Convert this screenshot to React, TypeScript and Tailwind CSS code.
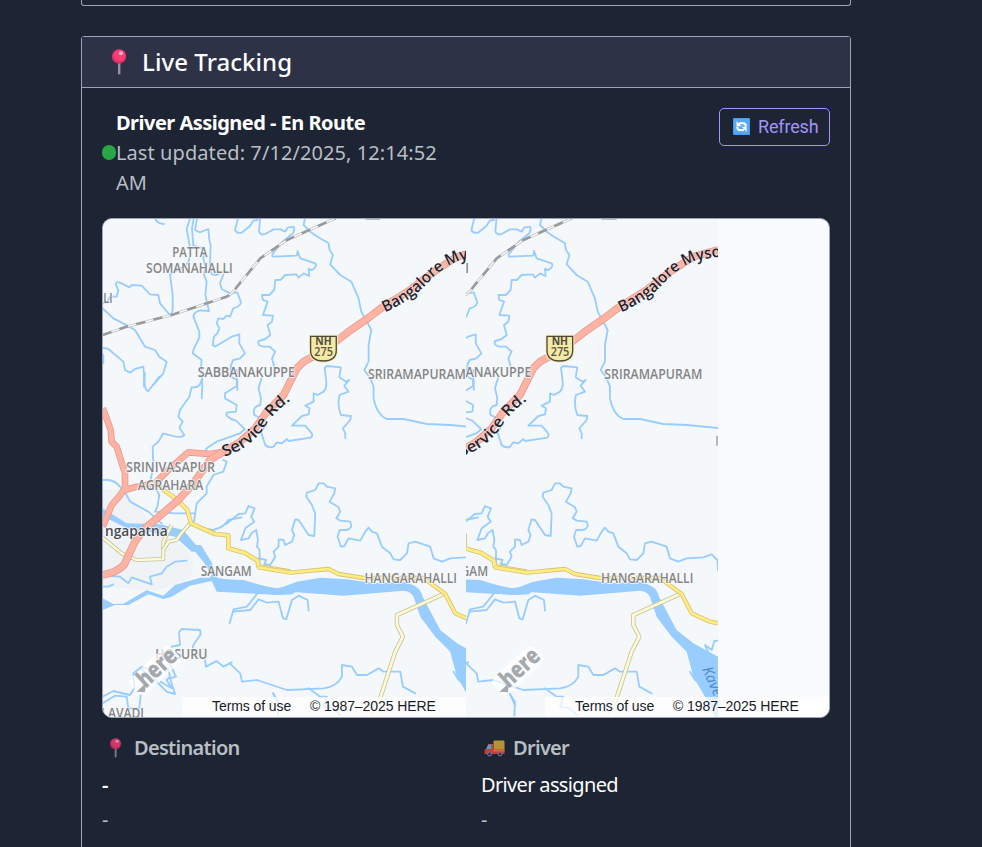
import React from "react";

const LABEL = '"Open Sans", "Noto Sans", sans-serif';
const crop = (x: number, y: number) => `translate(${x} ${y}) scale(0.33333)`;

function Pin({ className }: { className: string }) {
  return (
    <svg viewBox="0 0 16 26" className={className}>
      <rect x="7" y="13" width="2.4" height="12.5" rx="1" fill="#9a8da5" />
      <circle cx="8" cy="7.5" r="7.2" fill="#d92f62" />
      <circle cx="8.6" cy="6.6" r="6" fill="#fb3d75" />
      <circle cx="10" cy="4.2" r="2" fill="#ffb3ca" />
    </svg>
  );
}

function RefreshIcon() {
  return (
    <svg viewBox="0 0 17 17" className="-mt-px h-[17px] w-[17px]">
      <rect width="17" height="17" rx="1" fill="#489cf0" />
      <rect x="1" y="1" width="15" height="14.5" rx="1" fill="#5aa9f7" />
      <g fill="none" stroke="#fff" strokeWidth="2">
        <path d="M6 5.2h4.2q2.6 0 2.6 3.2" />
        <path d="M11 12h-4.2q-2.6 0-2.6-3.2" />
      </g>
      <path d="M3.6 3.2v5h5zM13.6 13.8v-5h-5z" fill="#fff" />
    </svg>
  );
}

function Truck() {
  return (
    <svg viewBox="0 0 21 17" className="h-[17px] w-[21px] opacity-85">
      <path d="M9.5 1.5q0-1 1-1h9q1 0 1 1v9.500h-11z" fill="#d0a63c" />
      <path d="M4.300 4h5.200v6H1.500z" fill="#dc4b3c" />
      <path d="M4.500 4.500h2.700v4.500H2.200z" fill="#58b6de" />
      <path d="M.5 9.500h20v4.500H.5z" fill="#df4638" />
      <path d="M9 10h11.500v1.500H9z" fill="#ee7b43" />
      <g fill="#3d3457" stroke="#8d7fa8" strokeWidth="1">
        <circle cx="5.500" cy="14" r="2" />
        <circle cx="16" cy="14" r="2" />
      </g>
    </svg>
  );
}

function Road({ d, width, fill, edge }: { d: string; width: number; fill: string; edge: string }) {
  return (
    <g fill="none" strokeLinejoin="round">
      <path d={d} stroke={edge} strokeWidth={width} />
      <path d={d} stroke={fill} strokeWidth={width - 5} />
    </g>
  );
}

function Label({ x, y, w, children, size = 41, color = "#858585" }: { x: number; y: number; w: number; children: string; size?: number; color?: string }) {
  return (
    <g fontFamily={LABEL} fontSize={size} fontWeight={600}>
      <text x={x} y={y} textLength={w} lengthAdjust="spacingAndGlyphs" fill={color} stroke="#f5f8fb" strokeWidth="5" strokeLinejoin="round" paintOrder="stroke">
        {children}
      </text>
    </g>
  );
}

function MapArt({ id }: { id: string }) {
  const red = { fill: "#ffb3a3", edge: "#e89b92" };
  const yellow = { fill: "#ffef7a", edge: "#d9bf82" };
  const pale = { fill: "#fdfbd5", edge: "#c4c2a0" };
  return (
    <g clipPath={`url(#${id}-extent)`}>
      <clipPath id={`${id}-extent`}>
        <rect x="90" y="200" width="391.6" height="530" />
      </clipPath>
      <rect x="90" y="200" width="392" height="530" fill="#f5f8fb" />
      <path d="M102 490Q124 484 139 507Q156 530 185 548Q199 562 190 577Q165 595 130 589L102 586Z" fill="#f0f3f5" />

      <g fill="#99ccff">
        <path transform={crop(100, 380)} d="M8 385L80 430L180 433L250 450L305 515L275 515L225 470L150 455L80 445L8 408Z" />
        <path transform={crop(100, 545)} d="M268 0L303 0L335 52L355 110L325 105L335 90L310 50ZM8 160L40 177L70 176L140 136L190 152L225 120L300 98L350 98L450 115L530 130L580 130L580 148L540 150L350 140L335 108L270 122L215 155L190 162L145 148L85 180L45 180L8 195Z" />
        <path transform={crop(223.6, 450)} d="M0 388L60 390L150 417L180 410L220 395L290 383L370 388L450 400L540 397Q590 405 597 440L650 540L700 580L774 620V820L735 740L700 680L680 605L635 560L590 500L570 440Q560 424 540 422L360 437L220 427L150 435L100 425L0 425Z" />
      </g>

      <g fill="none" stroke="#99ccff" strokeWidth="5.500" strokeLinejoin="round" strokeLinecap="round">
        <g transform={crop(100, 215)}>
          <path d="M165 5Q166 25 192 27M272 5L260 42L268 85L272 115L265 143L235 165L210 178L218 240L218 285Q216 300 208 298L180 265L175 240L150 238L125 212L95 210L88 217L60 203Q48 198 47 208L55 225L50 245L30 245L22 262L8 265" />
          <path d="M292 5L285 45L300 52L325 42L328 75L332 90L330 150L335 178L350 180L375 165L360 205L365 222L390 235L412 232L423 262Q420 275 400 280L390 305L380 302L370 312L355 310L350 325L358 340L352 355L342 365L338 390L345 395L395 365L418 358L418 385L435 415L420 430L400 435L393 450L392 485L412 495L412 525" />
          <path d="M282 5L276 40L280 92L312 100L310 130L316 155L312 180L320 200L316 240L327 288L300 286Q280 292 280 305L298 350L298 368L280 405L278 415L305 435L303 455L307 510L305 550" />
          <path d="M415 5L405 45Q410 56 425 53L450 33L460 17L472 15L475 5" />
          <path d="M8 280L40 310L75 328L105 345L135 395L165 405L178 425L200 440L190 475L160 510M8 398L25 402L70 440L75 465L90 473L105 462L130 455L132 475L132 515M10 420V445" />
        </g>
        <g transform={crop(223.6, 215)}>
          <path d="M110 5L106 50Q112 62 125 57L150 43L170 43L185 50L192 38L210 35Q215 42 208 55L175 82L148 115Q143 125 150 125L220 122L222 108L230 130L275 145Q282 155 265 165L255 162L257 183L240 175L225 188L218 178L185 180L170 195L155 195L152 225L137 240L115 240L118 255L132 260L125 280L118 300L148 302L145 320L132 330L140 360L125 372L105 378Q100 392 120 395L138 395L155 410L145 430L152 455M115 485L105 520L112 550L110 570Q85 575 92 600L112 610L120 640L112 650L125 690Q135 700 150 695L160 682L175 685L190 672L195 678L262 668Q270 660 262 652L245 632L205 632L235 603L255 598L258 580L245 572L270 560L270 535L282 540L300 530Q310 520 308 500L303 458L310 453L352 457L347 487L368 500L377 495L362 512L375 530L348 540Q340 570 352 600L382 603L380 615L358 640L365 655V670" />
          <path d="M245 5L240 30L260 50L282 65L315 85L318 105L328 120L320 148L350 180L383 200L405 250L413 290L430 320L443 345L435 390L435 440L422 465L440 490L450 515L450 550Q460 600 490 612L540 612L610 627L680 630L774 639" />
        </g>
        <g transform={crop(100, 380)}>
          <path d="M135 -20Q130 30 145 34L177 -10M305 0Q300 25 275 22L268 50L240 90L235 110L248 125L238 143L253 165Q245 178 190 160L175 185L158 200L160 260L152 300L178 345L172 380L165 395L225 400L285 400M410 -30L410 18L375 40L375 55L410 75L408 95L380 98Q375 112 408 122L435 148L420 160L378 175L350 185L320 205L310 230M370 240L380 245L370 275L340 285L320 320L320 340L290 370L282 425M8 300Q40 295 60 320L80 345L90 365L145 395L185 430M275 430L310 445L340 450Q375 440 385 420L425 412" />
        </g>
        <g transform={crop(100, 545)}>
          <path d="M35 93L60 95L85 115L95 97L155 118L150 95L185 85L200 65L225 50L260 47M8 125L25 125L40 118M315 345L318 365L350 348L370 365L395 352M240 300L237 262L245 252L300 255L302 268L280 300L278 312M240 300L215 305L205 325L208 355L218 375L228 395L210 400L225 447L200 440L165 405L145 372L125 366L100 385L103 430L90 450L40 438L8 455M204 370L210 395L200 405L215 430L182 410M8 475L45 452L80 455L85 490L118 490L122 450M118 370Q140 380 148 400M520 445L535 480" />
        </g>
        <g transform={crop(223.6, 450)}>
          <path d="M8 222L45 192L65 190L75 168L93 175L83 200L92 215L65 235L52 270L75 265L85 248L98 240L103 270L100 290L108 300L108 340M105 325L128 330L122 342L140 345L155 320L150 305L165 290L165 268L180 270L185 285L205 275L212 255L205 240L215 208L225 210L255 255L272 258L275 190L265 165L248 140L250 128L275 120L285 100L300 100L310 110L335 115L332 130L318 155L345 172L350 185L338 205L350 212L380 215Q390 235 368 240L348 240L342 260L352 290L362 288L375 265L410 272L425 245L435 233L445 245L460 250L475 290L500 310L510 328L530 330L550 310L555 280L575 275L620 290L630 325L655 335L680 325L730 322L755 313L772 330L774 360" />
          <path d="M18 520L30 478L70 470L100 432M28 485L80 480L105 448L130 458L165 455L178 505L188 508L205 450L225 437L252 450L255 482M18 640L50 670L55 695L100 690L190 720L300 715Q340 710 355 680L355 645L385 650L400 675L430 675L465 655L480 665L530 665L538 710L575 730M255 715L290 740L310 740L300 770L330 775L350 795M148 730L165 755L163 797M774 572L763 573L755 600L735 585L745 608M690 665L705 690L735 710L742 750" />
        </g>
      </g>

      <g transform={crop(100, 215)} fill="none">
        <path d="M8 360L80 335L215 300L380 245Q398 236 411 215L481 130L561 75L706 10" stroke="#b3b3b3" strokeWidth="8" />
        <path d="M8 360L80 335L215 300L380 245Q398 236 411 215L481 130L561 75L706 10" stroke="#f8f8f8" strokeWidth="4.500" />
        <path d="M8 360L80 335L215 300L380 245Q398 236 411 215L481 130L561 75L706 10" stroke="#999" strokeWidth="7" strokeDasharray="28 25" />
        <path d="M796 12H841" stroke="#aaa" strokeWidth="5" />
      </g>

      <g transform={crop(100, 545)}>
        <Road {...pale} width={12} d="M215 -60L190 -10L190 42L110 45L65 25L8 -22" />
      </g>
      <g transform={crop(100, 380)}>
        <Road {...pale} width={12} d="M270 430L240 465L230 480L205 485L190 510" />
        <Road {...yellow} width={14} d="M180 322L235 362L262 390L273 430L345 462L385 466L385 505L435 519L473 542L475 559L571 575" />
        <Road {...red} width={20} d="M8 85L18 110L32 150L35 185L50 200L75 280L75 325Q60 350 35 375L8 440M75 330L105 322L165 310L210 265L265 217L330 222L370 215" />
        <Road {...red} width={23} d="M370 215L330 240L280 310L235 360L130 450L105 485L72 555Q50 577 8 585" />
      </g>
      <g transform={crop(223.6, 450)}>
        <Road {...pale} width={13} d="M660 432L520 495L520 525L538 560L515 605L468 750L440 790" />
        <Road {...yellow} width={13} d="M104 352L200 368L315 357L345 372L420 384L600 384L665 432L695 490L750 515L774 520" />
        {id === "east" && (
          <text transform="translate(726 658) rotate(66)" fontFamily={LABEL} fontStyle="italic" fontSize="44" fill="#4b8bd0">Kaveri</text>
        )}
      </g>
      <g transform={crop(223.6, 215)}>
        <Road {...red} width={23} d="M0 711L50 680L95 640L130 590L180 540L220 460L240 440L300 408L375 350L430 312L475 278L560 225L630 170L700 125L774 105" />
        <path id={`${id}-highway`} d="M484 292Q565 255 613 203Q650 162 695 142Q740 125 960 104" fill="none" />
        <path id={`${id}-service`} d="M2 725Q85 698 127 630Q160 580 222 543" fill="none" />
        <g fontFamily={LABEL} fontSize="47" fontWeight="600" fill="#1e2430" stroke="#f8f8f8" strokeWidth="2" paintOrder="stroke">
          <text textLength="398" lengthAdjust="spacingAndGlyphs"><textPath href={`#${id}-highway`} textLength="398" lengthAdjust="spacingAndGlyphs">Bangalore Mysore</textPath></text>
          <text textLength="266" lengthAdjust="spacingAndGlyphs"><textPath href={`#${id}-service`} textLength="266" lengthAdjust="spacingAndGlyphs">Service Rd.</textPath></text>
        </g>
        <path d="M261 364H338V406Q338 438 299 438Q261 438 261 406Z" fill="#f5e9a6" stroke="#f7edbd" strokeWidth="10" />
        <path d="M261 364H338V406Q338 438 299 438Q261 438 261 406Z" fill="#f5e9a6" stroke="#4d4a3c" strokeWidth="4" />
        <text x="275" y="391" fontFamily={LABEL} fontSize="29" fontWeight="700" textLength="49" lengthAdjust="spacingAndGlyphs" fill="#514e40">NH</text>
        <text x="272" y="424" fontFamily={LABEL} fontSize="35" fontWeight="600" textLength="56" lengthAdjust="spacingAndGlyphs" fill="#5b5747">275</text>
        <Label x={433} y={491} w={294}>SRIRAMAPURAM</Label>
        <path d="M771 662V692" stroke="#999" strokeWidth="4" />
      </g>
      <g transform={crop(100, 215)}>
        <Label x={217} y={126} w={105}>PATTA</Label>
        <Label x={138} y={173} w={260}>SOMANAHALLI</Label>
        <Label x={10} y={265} w={28}>LI</Label>
        <Label x={293} y={487} w={292}>SABBANAKUPPE</Label>
      </g>
      <g transform={crop(100, 380)}>
        <Label x={78} y={277} w={267}>SRINIVASAPUR</Label>
        <Label x={113} y={330} w={197}>AGRAHARA</Label>
        <Label x={15} y={469} w={188} size={43} color="#474b55">ngapatna</Label>
      </g>
      <g transform={crop(100, 545)}>
        <Label x={302} y={92} w={153}>SANGAM</Label>
        <Label x={166} y={343} w={156}>HOSURU</Label>
        <Label x={4} y={518} w={128}>LAVADI</Label>
      </g>
      <g transform={crop(223.6, 450)}>
        <Label x={423} y={398} w={277}>HANGARAHALLI</Label>
      </g>
    </g>
  );
}

function Tile({ id, left }: { id: string; left: number }) {
  return (
    <div className="relative h-full w-[363px] shrink-0 overflow-hidden">
      <svg className="block h-[498px] w-[363px]" viewBox={`${left} 219 363 498`}>
        <MapArt id={id} />
        <g transform={`translate(${left + 50.500} 670.500) rotate(-43)`}>
          <rect x="-27" y="-10" width="56" height="22" rx="6" fill="#fff" fillOpacity="0.700" />
          <path d="M-27 4H-14L-21 10Z" fill="#a5a9ad" />
          <text x="-18" y="8" fontFamily={LABEL} fontSize="24" fontWeight="800" textLength="45" lengthAdjust="spacingAndGlyphs" fill="#a5a9ad">here</text>
        </g>
      </svg>
      <div className="absolute right-0 bottom-0 flex h-[20px] w-[284px] items-center bg-white/75 pb-[2px] pl-[30px] font-['Liberation_Sans',Arial,sans-serif] text-[14px] leading-[18px] tracking-[-0.080px] whitespace-nowrap text-[#171c29]">
        <span className="w-[98px]">Terms of use</span>
        <span>© 1987–2025 HERE</span>
      </div>
    </div>
  );
}

export default function App() {
  return (
    <div className="h-[847px] w-[982px] overflow-hidden bg-[#1d2433] font-['Noto_Sans',sans-serif] text-white">
      <div className="ml-[81px] h-[6px] w-[770px] rounded-b-[3px] border border-t-0 border-[#9da4ba]" />
      <section className="mt-[30px] ml-[81px] h-[900px] w-[770px] rounded-[3px] border border-[#9da4ba]">
        <header className="flex h-[51px] items-center border-b border-[#9da4ba] bg-[#2d3246] pl-[29px]">
          <Pin className="h-[26px] w-[16px]" />
          <h2 className="ml-[15px] text-[24px] font-medium tracking-[0.070px]">Live Tracking</h2>
        </header>
        <div className="p-[20px]">
          <div className="mb-[20px] flex items-start justify-between">
            <div className="flex items-center">
              <span className="mb-px h-[15px] w-[14px] rounded-full bg-[#28a745]" />
              <div className="w-[340px] text-[20px] leading-[30px]">
                <div className="font-bold tracking-[-0.520px] whitespace-nowrap">Driver Assigned - En Route</div>
                <div className="text-[#b9bec5]"><span className="tracking-[0.080px]">Last updated: 7/12/2025, 12:14:52</span><br />AM</div>
              </div>
            </div>
            <button className="flex h-[38px] w-[111px] items-center gap-[8px] rounded-[5px] border border-[#a393fc] pl-[13px] font-[Roboto,sans-serif] text-[18px] tracking-[-0.150px] text-[#a393fc]">
              <RefreshIcon />
              <span className="-mt-[2px]">Refresh</span>
            </button>
          </div>
          <div className="flex h-[500px] w-[728px] overflow-hidden rounded-[10px] border border-[#9da4ba] bg-[#fafbfe]">
            <Tile id="west" left={103} />
            <Tile id="east" left={229.6} />
          </div>
          <div className="mt-[15px] grid grid-cols-2 gap-x-[30px] text-[20px] leading-[30px]">
            <div>
              <div className="flex items-center text-[#b9bec5]">
                <Pin className="ml-[7px] h-[20px] w-[13px] opacity-80" />
                <span className="ml-[12px] font-semibold tracking-[-0.700px]">Destination</span>
              </div>
              <div className="mt-[7px] font-semibold">-</div>
              <div className="mt-[5px] text-[#b9bec5]">-</div>
            </div>
            <div>
              <div className="flex items-center text-[#b9bec5]">
                <span className="ml-[3px]"><Truck /></span>
                <span className="ml-[8px] font-semibold tracking-[-0.700px]">Driver</span>
              </div>
              <div className="mt-[7px] tracking-[-0.650px]">Driver assigned</div>
              <div className="mt-[5px] text-[#b9bec5]">-</div>
            </div>
          </div>
        </div>
      </section>
    </div>
  );
}
